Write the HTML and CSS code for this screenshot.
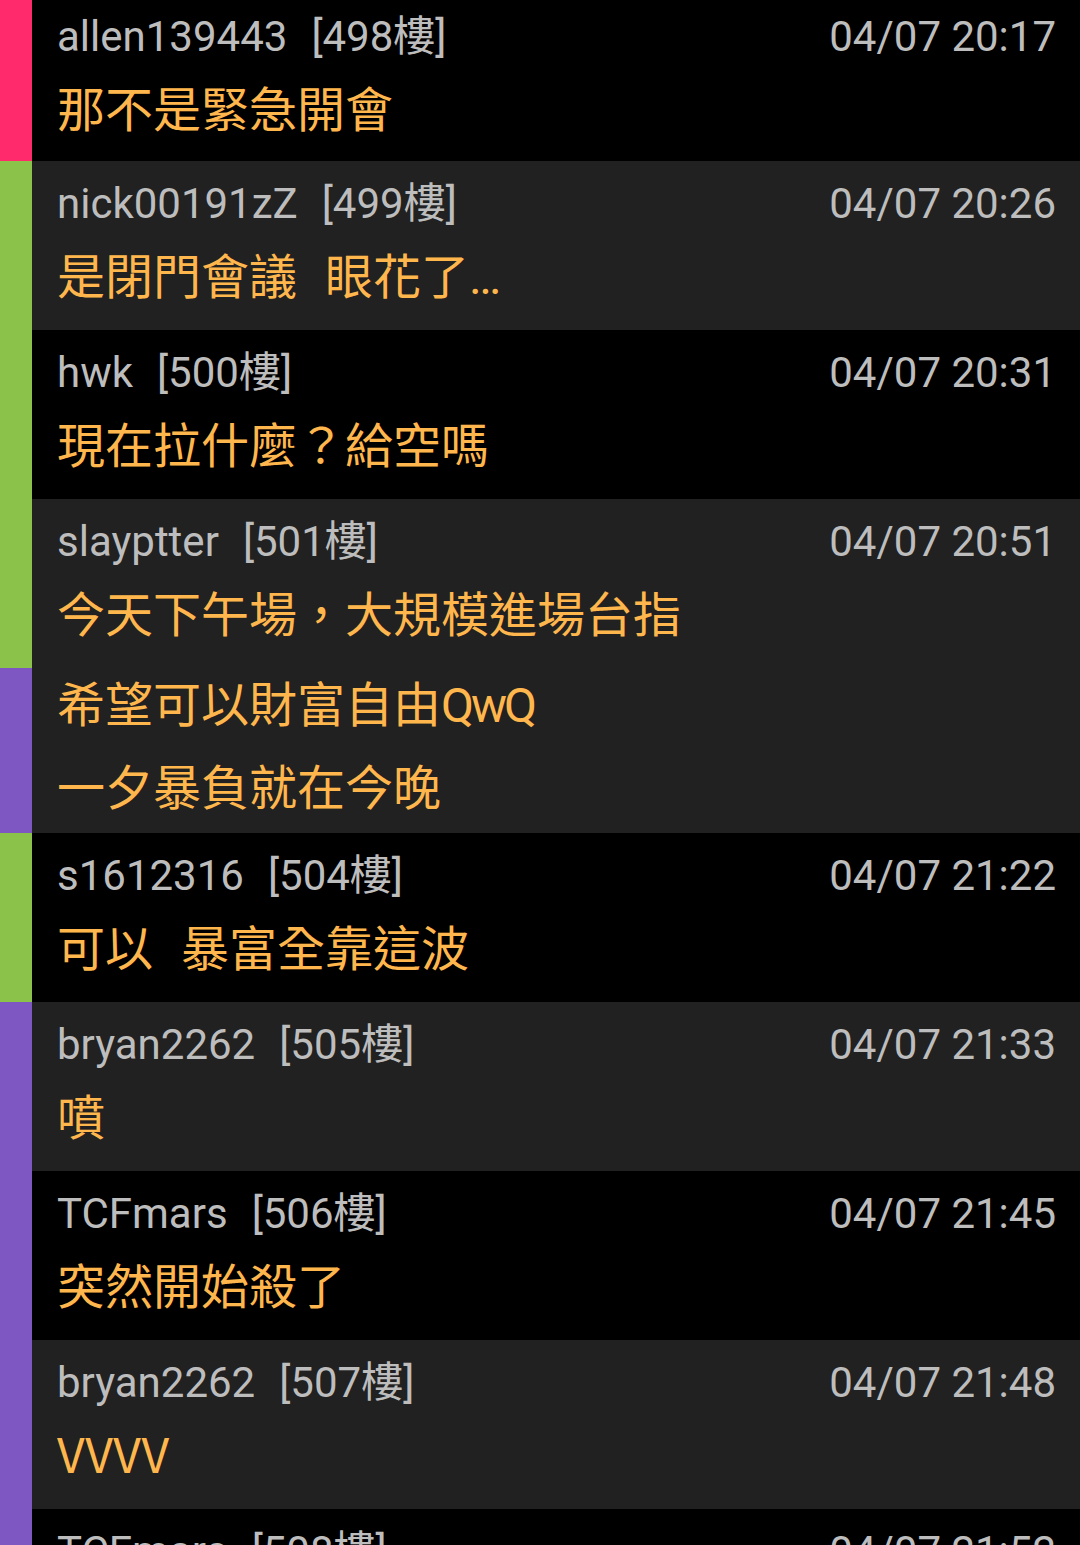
FILE: index.html
```html
<!DOCTYPE html>
<html lang="zh-Hant">
<head>
<meta charset="utf-8">
<title>Comments</title>
<link rel="stylesheet" href="styles.css">
</head>
<body>
<div class="list">
  <div class="item first bg-black bar-pink">
    <div class="content">
      <div class="head"><span class="user">allen139443</span><span class="floor">[498樓]</span><span class="time">04/07 20:17</span></div>
      <div class="text">那不是緊急開會</div>
    </div>
  </div>
  <div class="item bg-gray bar-green">
    <div class="content">
      <div class="head"><span class="user">nick00191zZ</span><span class="floor">[499樓]</span><span class="time">04/07 20:26</span></div>
      <div class="text">是閉門會議<span class="sp">　</span>眼花了<span class="latin">…</span></div>
    </div>
  </div>
  <div class="item bg-black bar-green">
    <div class="content">
      <div class="head"><span class="user">hwk</span><span class="floor">[500樓]</span><span class="time">04/07 20:31</span></div>
      <div class="text">現在拉什麼？給空嗎</div>
    </div>
  </div>
  <div class="item bg-gray bar-green">
    <div class="content">
      <div class="head"><span class="user">slayptter</span><span class="floor">[501樓]</span><span class="time">04/07 20:51</span></div>
      <div class="text">今天下午場，大規模進場台指</div>
    </div>
  </div>
  <div class="item cont bg-gray bar-purple">
    <div class="content">
      <div class="text">希望可以財富自由<span class="latin narrow">QwQ</span></div>
    </div>
  </div>
  <div class="item cont bg-gray bar-purple">
    <div class="content">
      <div class="text">一夕暴負就在今晚</div>
    </div>
  </div>
  <div class="item bg-black bar-green">
    <div class="content">
      <div class="head"><span class="user">s1612316</span><span class="floor">[504樓]</span><span class="time">04/07 21:22</span></div>
      <div class="text">可以<span class="sp">　</span>暴富全靠這波</div>
    </div>
  </div>
  <div class="item bg-gray bar-purple">
    <div class="content">
      <div class="head"><span class="user">bryan2262</span><span class="floor">[505樓]</span><span class="time">04/07 21:33</span></div>
      <div class="text">噴</div>
    </div>
  </div>
  <div class="item bg-black bar-purple">
    <div class="content">
      <div class="head"><span class="user">TCFmars</span><span class="floor">[506樓]</span><span class="time">04/07 21:45</span></div>
      <div class="text">突然開始殺了</div>
    </div>
  </div>
  <div class="item bg-gray bar-purple">
    <div class="content">
      <div class="head"><span class="user">bryan2262</span><span class="floor">[507樓]</span><span class="time">04/07 21:48</span></div>
      <div class="text">VVVV</div>
    </div>
  </div>
  <div class="item bg-black bar-purple">
    <div class="content">
      <div class="head"><span class="user">TCFmars</span><span class="floor">[508樓]</span><span class="time">04/07 21:52</span></div>
    </div>
  </div>
</div>
</body>
</html>
```

FILE: styles.css
```css
html, body {
  margin: 0;
  padding: 0;
  background: #000;
  overflow: hidden;
}
body {
  width: 1080px;
  height: 1545px;
  font-family: Roboto, "Noto Sans CJK TC", sans-serif;
}
.list {
  display: flex;
  flex-direction: column;
}
.item {
  display: flex;
  height: 169px;
  box-sizing: border-box;
  border-left: 32px solid #8bc34a;
  flex-shrink: 0;
}
.item.first {
  margin-top: -6px;
  height: 167px;
}
.item.cont {
  height: 82.5px;
}
.bg-black { background: #000; }
.bg-gray { background: #212121; }
.bar-pink { border-left-color: #ff2a6b; }
.bar-green { border-left-color: #8bc34a; }
.bar-purple { border-left-color: #7e57c2; }
.content {
  flex: 1;
  padding: 18px 24px 0 25px;
  display: flex;
  flex-direction: column;
}
.item.cont .content {
  padding-top: 0;
}
.head {
  display: flex;
  align-items: baseline;
  height: 50px;
  line-height: 50px;
  font-size: 42px;
  color: #bdbdbd;
  white-space: nowrap;
}
.floor {
  margin-left: 24px;
}
.time {
  margin-left: auto;
}
.text {
  margin-top: 10px;
  font-family: "Noto Sans CJK TC", sans-serif;
  font-size: 48px;
  line-height: 68px;
  height: 68px;
  color: #ffb74d;
  white-space: nowrap;
}
.item.cont .text {
  margin-top: -1px;
}
.sp {
  letter-spacing: -20px;
}
.latin {
  font-family: Roboto, sans-serif;
  line-height: 1;
}
.narrow {
  letter-spacing: -3px;
}
```
